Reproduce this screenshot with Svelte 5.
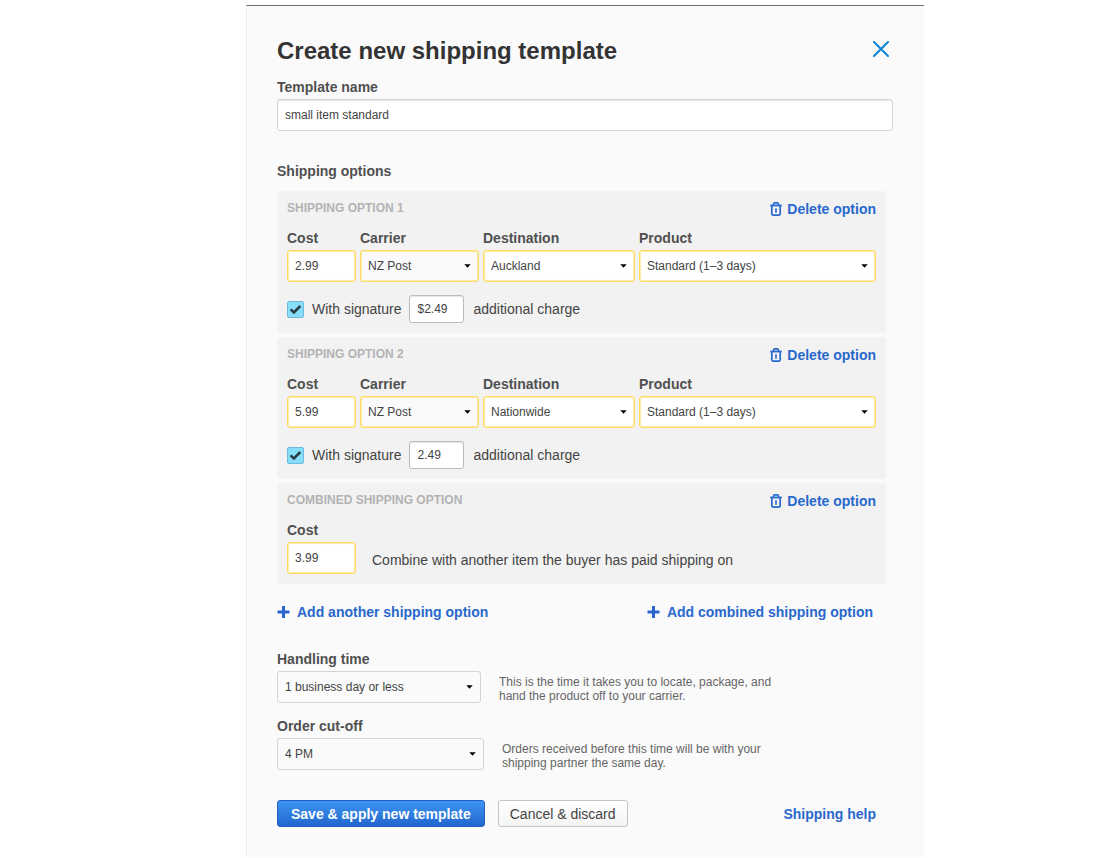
<script lang="ts">
	type ShippingOption = {
		id: number;
		cost: string;
		carrier: string;
		destination: string;
		product: string;
		signature: boolean;
		charge: string;
	};

	const carriers = ['NZ Post', 'CourierPost'];
	const destinations = ['Auckland', 'Nationwide'];
	const products = ['Standard (1–3 days)', 'Overnight'];

	let templateName = $state('small item standard');
	let options: ShippingOption[] = $state([
		{
			id: 1,
			cost: '2.99',
			carrier: 'NZ Post',
			destination: 'Auckland',
			product: 'Standard (1–3 days)',
			signature: true,
			charge: '$2.49'
		},
		{
			id: 2,
			cost: '5.99',
			carrier: 'NZ Post',
			destination: 'Nationwide',
			product: 'Standard (1–3 days)',
			signature: true,
			charge: '2.49'
		}
	]);
	let combined = $state([{ id: 1, cost: '3.99' }]);
	let handlingTime = $state('1 business day or less');
	let cutOff = $state('4 PM');
	let nextId = 3;

	function addOption() {
		options.push({
			id: nextId++,
			cost: '',
			carrier: carriers[0],
			destination: destinations[0],
			product: products[0],
			signature: false,
			charge: ''
		});
	}

	function addCombined() {
		combined.push({ id: nextId++, cost: '' });
	}

	function removeOption(id: number) {
		options = options.filter((option) => option.id !== id);
	}

	function removeCombined(id: number) {
		combined = combined.filter((option) => option.id !== id);
	}
</script>

{#snippet caret()}
	<svg class="caret" width="7" height="4" viewBox="0 0 7 4" aria-hidden="true">
		<path d="M0.3 0.3h6.4L3.5 3.8z" fill="#000" />
	</svg>
{/snippet}

{#snippet plus()}
	<svg width="13" height="12" viewBox="0 0 13 12" aria-hidden="true">
		<path d="M6.5 0v12M0.5 6h12" stroke="currentColor" stroke-width="3" />
	</svg>
{/snippet}

{#snippet deleteButton(remove: () => void)}
	<button class="link" type="button" onclick={remove}>
		<svg width="12" height="14" viewBox="0 0 12 14" fill="none" stroke="currentColor" aria-hidden="true">
			<path d="M0.2 3.5h11.6" stroke-width="1.8" />
			<path d="M3.5 3.4V2.4Q3.5 0.9 5 0.9h2Q8.5 0.9 8.5 2.4v1" stroke-width="1.6" />
			<path d="M1.8 3.8v8q0 1.3 1.3 1.3h5.8q1.3 0 1.3-1.3v-8" stroke-width="1.7" />
			<path d="M6 6.2v4.6" stroke-width="1.6" />
		</svg>
		Delete option
	</button>
{/snippet}

<form class="dialog" onsubmit={(event) => event.preventDefault()}>
	<header>
		<h1>Create new shipping template</h1>
		<button class="close" type="button" aria-label="Close">
			<svg width="16" height="16" viewBox="0 0 16 16" aria-hidden="true">
				<path
					d="M1 1l14 14M15 1L1 15"
					stroke="currentColor"
					stroke-width="2"
					stroke-linecap="round"
				/>
			</svg>
		</button>
	</header>

	<div class="field">
		<label for="template-name">Template name</label>
		<input id="template-name" type="text" bind:value={templateName} />
	</div>

	<section>
		<h2>Shipping options</h2>

		<div class="panels">
			{#each options as option, i (option.id)}
				<div class="panel">
					<div class="panel-head">
						<h3>SHIPPING OPTION {i + 1}</h3>
						{@render deleteButton(() => removeOption(option.id))}
					</div>

					<div class="fields">
						<div class="field">
							<label for="cost-{option.id}">Cost</label>
							<input id="cost-{option.id}" class="required" type="text" bind:value={option.cost} />
						</div>
						<div class="field">
							<label for="carrier-{option.id}">Carrier</label>
							<div class="select">
								<select id="carrier-{option.id}" class="required" bind:value={option.carrier}>
									{#each carriers as name}
										<option>{name}</option>
									{/each}
								</select>
								{@render caret()}
							</div>
						</div>
						<div class="field">
							<label for="destination-{option.id}">Destination</label>
							<div class="select">
								<select id="destination-{option.id}" class="required white" bind:value={option.destination}>
									{#each destinations as name}
										<option>{name}</option>
									{/each}
								</select>
								{@render caret()}
							</div>
						</div>
						<div class="field">
							<label for="product-{option.id}">Product</label>
							<div class="select">
								<select id="product-{option.id}" class="required white" bind:value={option.product}>
									{#each products as name}
										<option>{name}</option>
									{/each}
								</select>
								{@render caret()}
							</div>
						</div>
					</div>

					<div class="signature">
						<label class="check">
							<span class="box">
								<input type="checkbox" bind:checked={option.signature} />
								{#if option.signature}
									<svg width="17" height="17" viewBox="0 0 17 17" aria-hidden="true">
										<path d="M3.6 8.4l3.3 3.1 6.4-6.5" fill="none" stroke="#2b3c44" stroke-width="2.5" />
									</svg>
								{/if}
							</span>
							With signature
						</label>
						<input id="charge-{option.id}" type="text" bind:value={option.charge} />
						<label for="charge-{option.id}">additional charge</label>
					</div>
				</div>
			{/each}

			{#each combined as option (option.id)}
				<div class="panel">
					<div class="panel-head">
						<h3>COMBINED SHIPPING OPTION</h3>
						{@render deleteButton(() => removeCombined(option.id))}
					</div>
					<div class="fields combined">
						<div class="field">
							<label for="combined-{option.id}">Cost</label>
							<input id="combined-{option.id}" class="required" type="text" bind:value={option.cost} />
						</div>
						<p>Combine with another item the buyer has paid shipping on</p>
					</div>
				</div>
			{/each}
		</div>

		<div class="add">
			<button class="link" type="button" onclick={addOption}>
				{@render plus()}
				Add another shipping option
			</button>
			<button class="link" type="button" onclick={addCombined}>
				{@render plus()}
				Add combined shipping option
			</button>
		</div>
	</section>

	<div class="timing handling">
		<div class="field">
			<label for="handling">Handling time</label>
			<div class="select">
				<select id="handling" bind:value={handlingTime}>
					<option>1 business day or less</option>
					<option>2 business days</option>
				</select>
				{@render caret()}
			</div>
		</div>
		<p>This is the time it takes you to locate, package, and hand the product off to your carrier.</p>
	</div>

	<div class="timing cutoff">
		<div class="field">
			<label for="cutoff">Order cut-off</label>
			<div class="select">
				<select id="cutoff" bind:value={cutOff}>
					<option>12 PM</option>
					<option>4 PM</option>
				</select>
				{@render caret()}
			</div>
		</div>
		<p>Orders received before this time will be with your shipping partner the same day.</p>
	</div>

	<footer>
		<button class="button primary" type="submit">Save &amp; apply new template</button>
		<button class="button" type="button">Cancel &amp; discard</button>
		<a href="#help">Shipping help</a>
	</footer>
</form>

<style>
	:global(body) {
		background: #fff;
	}

	.dialog {
		box-sizing: border-box;
		margin: 5px 178px 0 246px;
		border-top: 1px solid #6c6c70;
		border-left: 1px solid #eee;
		background: #fafafa;
		padding: 31px 31px 30px 30px;
		color: #444;
		font-family: 'Liberation Sans', Arial, sans-serif;
		font-size: 14px;
		line-height: 16px;
	}

	h1,
	h2,
	h3,
	p {
		margin: 0;
	}

	header {
		display: flex;
		justify-content: space-between;
		align-items: flex-start;
		margin-bottom: 14px;
	}

	h1 {
		color: #333;
		font-size: 24px;
		line-height: 28px;
	}

	button {
		font: inherit;
		cursor: pointer;
	}

	.close {
		display: flex;
		border: 0;
		background: none;
		padding: 4px;
		color: #0a84d6;
	}

	.field {
		display: grid;
		gap: 4px;
	}

	.field label,
	h2 {
		color: #505050;
		font-size: 14px;
		font-weight: bold;
		line-height: 16px;
	}

	input[type='text'],
	select {
		box-sizing: border-box;
		width: 100%;
		height: 32px;
		margin: 0;
		border: 1px solid #d4d4d4;
		border-radius: 3px;
		background: #fff;
		padding: 0 7px;
		color: #444;
		font: 12px 'Liberation Sans', Arial, sans-serif;
	}

	input[type='text'] {
		box-shadow: inset 0 1px 1px rgba(0, 0, 0, 0.1);
	}

	select {
		grid-area: 1 / 1;
		appearance: none;
		background: #fafafa;
	}

	select.white {
		background: #fff;
	}

	input[type='text'].required,
	select.required {
		border-color: #fddb60;
		box-shadow: inset 0 0 1px 1px #fdeaa6;
	}

	.select {
		display: grid;
		align-items: center;
	}

	.caret {
		grid-area: 1 / 1;
		justify-self: end;
		margin-right: 8px;
		pointer-events: none;
	}

	section {
		margin-top: 32px;
	}

	.panels {
		display: grid;
		gap: 4px;
		margin: 12px 7px 0 0;
	}

	.panel {
		border-radius: 3px;
		background: #f2f2f2;
		padding: 10px;
	}

	.panel-head {
		display: flex;
		justify-content: space-between;
		height: 16px;
	}

	h3 {
		color: #b3b3b3;
		font-size: 12px;
		line-height: 14px;
	}

	.link {
		display: flex;
		align-items: center;
		border: 0;
		background: none;
		padding: 0;
		color: #2868cd;
		font-weight: bold;
	}

	.panel-head .link {
		gap: 5px;
	}

	.fields {
		display: grid;
		grid-template-columns: 69px 119px 152px 1fr;
		gap: 4px;
		margin-top: 13px;
	}

	.combined {
		grid-template-columns: 69px 1fr;
		gap: 16px;
		align-items: end;
	}

	.combined p {
		padding-bottom: 6px;
	}

	.signature,
	.check {
		display: flex;
		align-items: center;
	}

	.signature {
		margin-top: 13px;
	}

	.signature input[type='text'] {
		width: 55px;
		height: 28px;
		margin: 0 9px 0 8px;
		border-color: #bbb;
	}

	.check {
		gap: 8px;
	}

	.box {
		display: grid;
	}

	.box input {
		grid-area: 1 / 1;
		box-sizing: border-box;
		appearance: none;
		width: 17px;
		height: 17px;
		margin: 0;
		border: 1px solid #6fb9dc;
		border-radius: 2px;
		background: #86def8;
	}

	.box svg {
		grid-area: 1 / 1;
		pointer-events: none;
	}

	.add {
		display: flex;
		justify-content: space-between;
		margin: 20px 20px 0 0;
	}

	.add .link {
		gap: 7px;
	}

	.timing {
		display: flex;
		align-items: flex-end;
		gap: 18px;
	}

	.timing p {
		max-width: 275px;
		color: #666;
		font-size: 12px;
		line-height: 14px;
	}

	.handling {
		margin-top: 31px;
	}

	.handling .field {
		width: 204px;
	}

	.cutoff {
		margin-top: 15px;
	}

	.cutoff .field {
		width: 207px;
	}

	footer {
		display: flex;
		align-items: center;
		margin: 30px 17px 0 0;
	}

	.button {
		height: 27px;
		border: 1px solid #c4c4c4;
		border-radius: 3px;
		background: linear-gradient(#fff, #f4f4f4);
		padding: 0 11px;
		color: #444;
	}

	.primary {
		margin-right: 13px;
		border-color: #2260c4;
		background: linear-gradient(#3d95f3, #2266cd);
		padding: 0 13px;
		color: #fff;
		font-weight: bold;
	}

	a {
		margin-left: auto;
		color: #2868cd;
		font-weight: bold;
		text-decoration: none;
	}
</style>
